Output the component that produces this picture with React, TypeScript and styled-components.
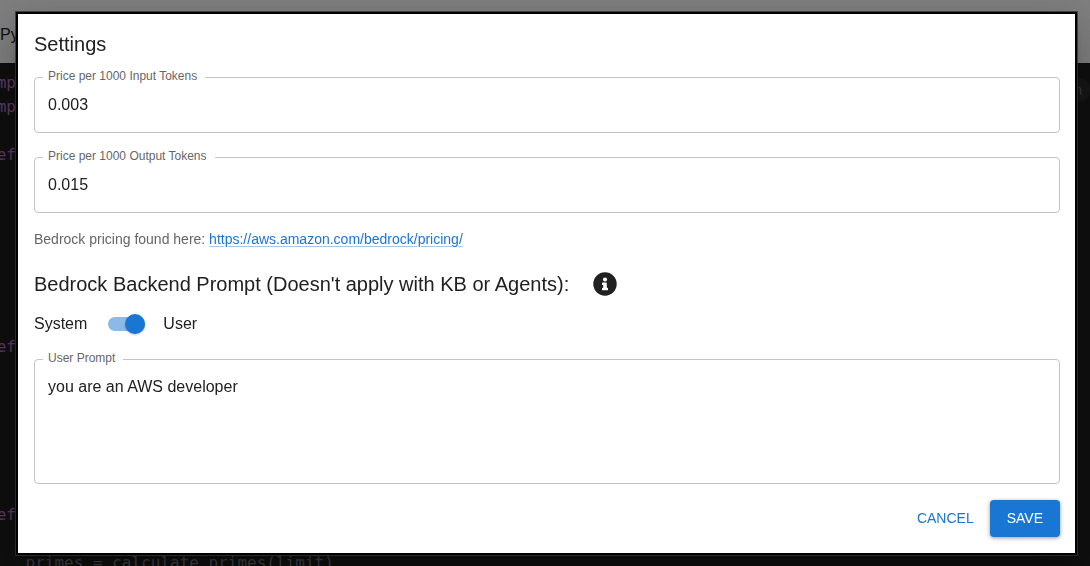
import React, { useState } from "react";
import styled, { createGlobalStyle } from "styled-components";

const Global = createGlobalStyle`
  * { box-sizing: border-box; }
  body { margin: 0; background: #1f1f1f; font-family: "Liberation Sans", Arial, sans-serif; color: #212121; overflow: hidden; }
`;

const Page = styled.div`
  min-height: 100vh;
`;

const AppBar = styled.header`
  height: 63px;
  display: flex;
  align-items: center;
  padding-top: 6px;
  background: #ffffff;
  font-size: 16px;
`;

const Editor = styled.main`
  display: flex;
  justify-content: space-between;
  align-items: flex-start;
  padding-top: 8px;
  background: #1e1e1e;
`;

const Code = styled.pre`
  margin: 0 0 0 -13px;
  font: 16px/24px "DejaVu Sans Mono", monospace;
  color: #7c7f86;
`;

const CodeLine = styled.div`
  height: 24px;
`;

const Keyword = styled.span`
  color: #b873c0;
`;

const RunButton = styled.button`
  margin-top: 7px;
  height: 24px;
  padding: 0 8px;
  border: 0;
  border-radius: 12px;
  background: #2c2c2c;
  color: #777777;
  font: 14px "Liberation Sans", Arial, sans-serif;
`;

const Backdrop = styled.div`
  position: fixed;
  inset: 0;
  padding: 12px 13px 11px 16px;
  background: rgba(0, 0, 0, 0.5);
`;

const Dialog = styled.form`
  padding: 14px 15px 16px 16px;
  border: 2px solid #000000;
  background: #ffffff;
  box-shadow: 0 0 0 1px rgba(50, 50, 50, 0.8), 0 11px 15px -7px rgba(0, 0, 0, 0.2),
    0 24px 38px 3px rgba(0, 0, 0, 0.14), 0 9px 46px 8px rgba(0, 0, 0, 0.12);
`;

const Title = styled.h2`
  margin: 0;
  font-size: 20px;
  font-weight: 400;
  line-height: 32px;
`;

const Field = styled.div<{ $gap: number }>`
  position: relative;
  margin-top: ${(p) => p.$gap}px;
`;

const Label = styled.label`
  position: absolute;
  top: -9px;
  left: 9px;
  padding: 0 8px 0 5px;
  background: #ffffff;
  color: #666666;
  font-size: 12px;
  line-height: 16px;
`;

const Input = styled.input`
  display: block;
  width: 100%;
  height: 56px;
  padding: 0 13px;
  border: 1px solid #c4c4c4;
  border-radius: 4px;
  background: transparent;
  color: #212121;
  font: 16px "Liberation Sans", Arial, sans-serif;
  outline: 0;
`;

const TextArea = styled.textarea`
  display: block;
  width: 100%;
  height: 125px;
  padding: 15px 13px;
  border: 1px solid #c4c4c4;
  border-radius: 4px;
  background: transparent;
  color: #212121;
  font: 16px/23px "Liberation Sans", Arial, sans-serif;
  resize: none;
  outline: 0;
`;

const Note = styled.p`
  margin: 16px 0 0;
  color: #666666;
  font-size: 14px;
  line-height: 20px;
`;

const Link = styled.a`
  color: #1976d2;
  text-decoration: underline rgba(25, 118, 210, 0.4);
  text-underline-offset: 2px;
`;

const SectionHead = styled.div`
  display: flex;
  align-items: center;
  gap: 24px;
  margin-top: 19px;
`;

const InfoButton = styled.button`
  display: flex;
  padding: 0;
  border: 0;
  background: none;
`;

const SwitchRow = styled.div`
  display: flex;
  align-items: center;
  margin-top: 5px;
  gap: 18px;
  font-size: 16px;
  line-height: 38px;
`;

const Switch = styled.input`
  appearance: none;
  display: flex;
  align-items: center;
  width: 37px;
  height: 14px;
  margin: 0 0 0 3px;
  border-radius: 7px;
  background: #8cbae8;
  &::before {
    content: "";
    width: 20px;
    height: 20px;
    flex: none;
    border-radius: 50%;
    background: #1976d2;
    box-shadow: 0 1px 2px rgba(0, 0, 0, 0.25);
  }
  &:checked {
    justify-content: flex-end;
  }
`;

const Actions = styled.div`
  display: flex;
  justify-content: flex-end;
  gap: 8px;
  margin-top: 16px;
`;

const Button = styled.button<{ $filled?: boolean }>`
  height: 37px;
  padding: 0 ${(p) => (p.$filled ? 17 : 8)}px 2px;
  border: 0;
  border-radius: 4px;
  background: ${(p) => (p.$filled ? "#1976d2" : "transparent")};
  color: ${(p) => (p.$filled ? "#ffffff" : "#1976d2")};
  box-shadow: ${(p) => (p.$filled ? "0 1px 4px rgba(0, 0, 0, 0.4)" : "none")};
  font: 14px "Liberation Sans", Arial, sans-serif;
  text-transform: uppercase;
`;

const codeLines: { keyword?: string; text?: string }[] = Array.from({ length: 21 }, () => ({}));
codeLines[0] = { keyword: "imp" };
codeLines[1] = { keyword: "imp" };
codeLines[3] = { keyword: "def" };
codeLines[11] = { keyword: "def" };
codeLines[18] = { keyword: "def" };
codeLines[20] = { text: "    primes = calculate_primes(limit)" };

const InfoIcon = () => (
  <svg width="24" height="24" viewBox="0 0 512 512" aria-hidden="true">
    <circle cx="256" cy="256" r="250" fill="#212121" />
    <circle cx="256" cy="160" r="44" fill="#ffffff" />
    <path
      fill="#ffffff"
      d="M206 224h74c8 0 14 6 14 14v96h12c8 0 14 6 14 14v28c0 8-6 14-14 14H206c-8 0-14-6-14-14v-28c0-8 6-14 14-14h12v-56h-12c-8 0-14-6-14-14v-26c0-8 6-14 14-14z"
    />
  </svg>
);

export default function App() {
  const [inputPrice, setInputPrice] = useState("0.003");
  const [outputPrice, setOutputPrice] = useState("0.015");
  const [userMode, setUserMode] = useState(true);
  const [prompt, setPrompt] = useState("you are an AWS developer");

  return (
    <Page>
      <Global />
      <AppBar>Py</AppBar>
      <Editor>
        <Code>
          {codeLines.map((line, i) => (
            <CodeLine key={i}>
              {line.keyword && <Keyword>{line.keyword}</Keyword>}
              {line.text}
            </CodeLine>
          ))}
        </Code>
        <RunButton type="button">Run</RunButton>
      </Editor>
      <Backdrop>
        <Dialog role="dialog" aria-labelledby="settings-title" onSubmit={(e) => e.preventDefault()}>
          <Title id="settings-title">Settings</Title>
          <Field $gap={17}>
            <Label htmlFor="input-price">Price per 1000 Input Tokens</Label>
            <Input id="input-price" value={inputPrice} onChange={(e) => setInputPrice(e.target.value)} />
          </Field>
          <Field $gap={24}>
            <Label htmlFor="output-price">Price per 1000 Output Tokens</Label>
            <Input id="output-price" value={outputPrice} onChange={(e) => setOutputPrice(e.target.value)} />
          </Field>
          <Note>
            Bedrock pricing found here:{" "}
            <Link href="https://aws.amazon.com/bedrock/pricing/">https://aws.amazon.com/bedrock/pricing/</Link>
          </Note>
          <SectionHead>
            <Title>Bedrock Backend Prompt (Doesn't apply with KB or Agents):</Title>
            <InfoButton type="button" aria-label="About the backend prompt">
              <InfoIcon />
            </InfoButton>
          </SectionHead>
          <SwitchRow>
            <span>System</span>
            <Switch
              type="checkbox"
              role="switch"
              id="prompt-mode"
              checked={userMode}
              onChange={(e) => setUserMode(e.target.checked)}
            />
            <label htmlFor="prompt-mode">User</label>
          </SwitchRow>
          <Field $gap={16}>
            <Label htmlFor="prompt">User Prompt</Label>
            <TextArea id="prompt" value={prompt} onChange={(e) => setPrompt(e.target.value)} />
          </Field>
          <Actions>
            <Button type="button">Cancel</Button>
            <Button type="submit" $filled>
              Save
            </Button>
          </Actions>
        </Dialog>
      </Backdrop>
    </Page>
  );
}
